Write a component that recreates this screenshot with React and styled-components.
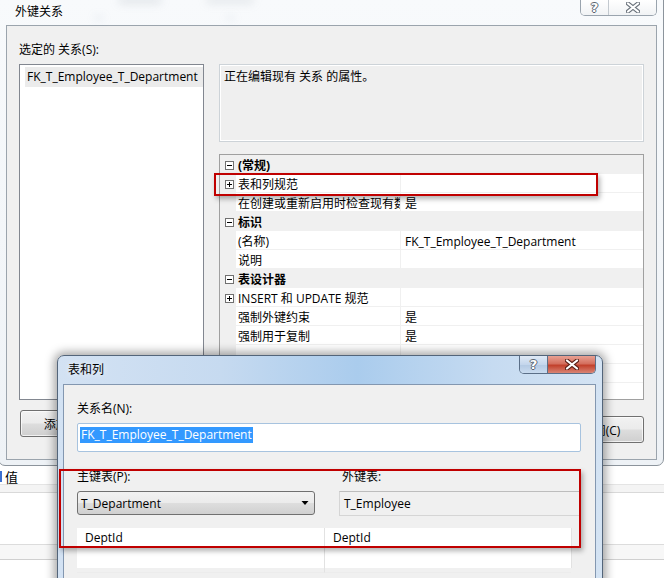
import React from 'react';
import styled, { createGlobalStyle } from 'styled-components';

const GlobalStyle = createGlobalStyle`
  html, body { margin: 0; padding: 0; background: #ffffff; }
  body {
    font-family: "Open Sans", "Noto Sans CJK SC", sans-serif;
    font-size: 12px;
    color: #000;
  }
  * { box-sizing: border-box; }
`;

const Desktop = styled.div`
  position: relative;
  width: 664px;
  height: 578px;
  overflow: hidden;
  background: #ffffff;
`;

/* ---------- window behind everything (bottom strip) ---------- */
const BehindWindow = styled.div`
  position: absolute;
  left: 0;
  top: 462px;
  width: 664px;
  height: 130px;
  background: #ffffff;
  display: flex;
  flex-direction: column;
`;

const BehindHeader = styled.div`
  height: 23px;
  display: flex;
  align-items: center;
  gap: 3px;
  padding: 7px 0 0 0;
  font-size: 13px;
  border-bottom: 1px solid #e4e4e4;
`;

const Caret = styled.span`
  width: 2px;
  height: 11px;
  background: #3a6fd0;
`;

const BehindBand = styled.div`
  height: ${p => p.$h}px;
  background: ${p => p.$bg};
  border-bottom: 1px solid ${p => p.$line};
`;

/* ---------- generic window parts ---------- */
const MainWindow = styled.div`
  position: absolute;
  left: -2px;
  top: -1px;
  width: 666px;
  height: 467px;
  background: linear-gradient(180deg, #f8fafc 0%, #eef2f6 100%);
  border: 1px solid #8c949c;
  border-radius: 0 0 7px 7px;
  display: flex;
  flex-direction: column;
  padding: 0 6px 5px 7px;
`;

const TitleBar = styled.div`
  position: relative;
  height: ${p => p.$h}px;
  display: flex;
  align-items: flex-start;
  padding: ${p => p.$pad};
  flex-shrink: 0;
`;

const TitleText = styled.div`
  position: relative;
  font-family: "Noto Sans CJK SC", sans-serif;
  font-size: 12px;
  line-height: 16px;
  color: #000;
  text-shadow: 0 0 6px rgba(255,255,255,0.9);
`;

const BlurBlob = styled.div`
  position: absolute;
  left: ${p => p.$x}px;
  top: ${p => p.$y}px;
  width: ${p => p.$w}px;
  height: ${p => p.$h}px;
  background: ${p => p.$c};
  filter: blur(4px);
  border-radius: 4px;
`;

const CaptionGroup = styled.div`
  position: absolute;
  top: 0;
  right: ${p => p.$right}px;
  display: flex;
  height: ${p => p.$h}px;
  border: 1px solid ${p => (p.$active ? '#5b6f88' : '#9aa4ae')};
  border-top: none;
  border-radius: 0 0 5px 5px;
  overflow: hidden;
  z-index: 2;
`;

const CapBtn = styled.div`
  width: ${p => p.$w}px;
  height: 100%;
  display: flex;
  align-items: center;
  justify-content: center;
  background: ${p =>
    p.$close
      ? 'linear-gradient(180deg, #e8a193 0%, #d46f5e 45%, #c2412c 55%, #d98474 100%)'
      : p.$active
      ? 'linear-gradient(180deg, #dfe9f5 0%, #c4d6ec 50%, #b3c9e3 51%, #c9dbef 100%)'
      : 'linear-gradient(180deg, #ffffff 0%, #f1f3f5 100%)'};
  border-left: ${p => (p.$divider ? `1px solid ${p.$active ? '#5b6f88' : '#c3c9cf'}` : 'none')};
`;

const HelpGlyph = styled.span`
  font-family: "DejaVu Sans", sans-serif;
  font-weight: bold;
  font-size: 13px;
  line-height: 13px;
  color: #ffffff;
  text-shadow: -1px 0 #5a6470, 1px 0 #5a6470, 0 -1px #5a6470, 0 1px #5a6470;
`;

const XIcon = ({ dark }) => (
  <svg width="14" height="11" viewBox="0 0 14 11">
    <path d="M2 1.5 L12 9.5 M12 1.5 L2 9.5" stroke={dark} strokeWidth="4.2" strokeLinecap="round" fill="none" />
    <path d="M2 1.5 L12 9.5 M12 1.5 L2 9.5" stroke="#ffffff" strokeWidth="2.2" strokeLinecap="round" fill="none" />
  </svg>
);

/* ---------- main dialog client ---------- */
const Client = styled.div`
  flex: 1;
  background: #f0f0f0;
  border: 1px solid #9ba4ad;
  display: grid;
  grid-template-columns: 185px 1fr;
  grid-template-rows: 16px 336px auto;
  column-gap: 15px;
  row-gap: 6px;
  padding: 16px 12px 0 12px;
`;

const Label = styled.div`
  font-size: 12px;
  line-height: 16px;
  white-space: nowrap;
  padding-left: ${p => p.$indent || 0}px;
`;

const ListBox = styled.div`
  background: #ffffff;
  border: 1px solid #828790;
  padding: 2px 0 0 5px;
`;

const ListItem = styled.div`
  height: 20px;
  line-height: 20px;
  padding-left: 2px;
  background: ${p => (p.$selected ? '#ebebeb' : 'transparent')};
  white-space: nowrap;
  overflow: hidden;
`;

const RightPanel = styled.div`
  display: flex;
  flex-direction: column;
  gap: 12px;
  min-width: 0;
`;

const DescBox = styled.div`
  height: 78px;
  border: 1px solid #cdd3d8;
  box-shadow: inset 1px 1px 0 #ffffff, inset -1px -1px 0 #ffffff;
  background: #efefef;
  padding: 4px 4px;
  line-height: 16px;
`;

const PropGrid = styled.div`
  flex: 1;
  background: #ffffff;
  border: 1px solid #a0a0a0;
  display: grid;
  grid-template-columns: 16px 165px 1fr;
  grid-auto-rows: 19px;
  align-content: start;
  overflow: hidden;
`;

const Gutter = styled.div`
  background: #f0f0f0;
  display: flex;
  align-items: center;
  justify-content: center;
  padding: 1px 0 0 3px;
`;

const NameCell = styled.div`
  display: flex;
  align-items: center;
  padding: 2px 0 0 2px;
  white-space: nowrap;
  overflow: hidden;
  border-bottom: 1px solid #f0f0f0;
  border-right: 1px solid #f0f0f0;
  font-weight: ${p => (p.$cat ? 'bold' : 'normal')};
  background: ${p => (p.$cat ? '#f0f0f0' : '#ffffff')};
  grid-column: ${p => (p.$cat ? '2 / 4' : 'auto')};
`;

const ValueCell = styled.div`
  display: flex;
  align-items: center;
  padding: 2px 0 0 4px;
  white-space: nowrap;
  overflow: hidden;
  border-bottom: 1px solid #f0f0f0;
`;

const Expander = ({ plus }) => (
  <svg width="9" height="9" viewBox="0 0 9 9">
    <rect x="0.5" y="0.5" width="8" height="8" fill="#ffffff" stroke="#707070" />
    <path d="M2 4.5 H7" stroke="#000" />
    {plus && <path d="M4.5 2 V7" stroke="#000" />}
  </svg>
);

const Button = styled.div`
  height: 27px;
  width: 86px;
  margin-top: ${p => p.$top}px;
  justify-self: ${p => (p.$end ? 'end' : 'start')};
  margin-left: ${p => (p.$end ? 0 : 1)}px;
  border: 1px solid #707070;
  border-radius: 3px;
  background: linear-gradient(180deg, #f2f2f2 0%, #ebebeb 48%, #dddddd 52%, #cfcfcf 100%);
  box-shadow: inset 0 0 0 1px rgba(255,255,255,0.7);
  display: flex;
  align-items: center;
  justify-content: center;
  font-size: 12px;
`;

/* ---------- front dialog ---------- */
const FrontWindow = styled.div`
  position: absolute;
  left: 57px;
  top: 355px;
  width: 546px;
  height: 240px;
  border: 1px solid #53657a;
  border-radius: 7px 7px 0 0;
  background: linear-gradient(90deg, #d3e2f3 0%, #c6daf0 30%, #aacced 55%, #c6dbf1 80%, #d4e3f3 100%);
  box-shadow: 0 0 10px 3px rgba(0, 0, 0, 0.35);
  display: flex;
  flex-direction: column;
  padding: 0 6px 0 5px;
  z-index: 3;
`;

const FrontClient = styled.div`
  flex: 1;
  background: #f0f0f0;
  border: 1px solid #8397b0;
  border-bottom: none;
  padding: 16px 14px 0 13px;
  display: flex;
  flex-direction: column;
`;

const TextInput = styled.div`
  margin-top: 6px;
  width: 504px;
  height: 29px;
  background: #ffffff;
  border: 1px solid #a7c3df;
  border-radius: 2px;
  padding: 2px 0 0 2px;
`;

const Selected = styled.span`
  display: inline-block;
  background: #3399ff;
  color: #ffffff;
  line-height: 16px;
  padding: 0 1px;
`;

const PairGrid = styled.div`
  margin-top: 17px;
  display: grid;
  grid-template-columns: 238px 241px;
  grid-template-rows: 16px 25px;
  column-gap: 24px;
  row-gap: 6px;
`;

const Select = styled.div`
  height: 24px;
  border: 1px solid #707070;
  border-radius: 3px;
  background: linear-gradient(180deg, #f2f2f2 0%, #ebebeb 48%, #dddddd 52%, #d0d0d0 100%);
  display: flex;
  align-items: center;
  justify-content: space-between;
  padding: 0 3px 0 3px;
`;

const ReadOnlyBox = styled.div`
  height: 25px;
  background: #f0f0f0;
  border: 1px solid #d5d5d5;
  border-top-color: #bdbdbd;
  display: flex;
  align-items: center;
  padding-left: 4px;
`;

const MapGrid = styled.div`
  margin-top: 12px;
  width: 495px;
  display: grid;
  grid-template-columns: 248px 1fr;
  grid-auto-rows: 20px;
  background: #ffffff;
  border-right: 1px solid #e2e2e2;
`;

const MapCell = styled.div`
  display: flex;
  align-items: center;
  padding-left: 8px;
  border-bottom: 1px solid #ececec;
  border-right: ${p => (p.$first ? '1px solid #e2e2e2' : 'none')};
  height: ${p => p.$h || 20}px;
`;

/* ---------- annotation ---------- */
const Highlight = styled.div`
  position: absolute;
  left: ${p => p.$x}px;
  top: ${p => p.$y}px;
  width: ${p => p.$w}px;
  height: ${p => p.$h}px;
  border: 2px solid #c00000;
  box-shadow: 2px 3px 5px rgba(0, 0, 0, 0.3);
  z-index: 5;
  pointer-events: none;
`;

const rows = [
  { cat: true, name: '(常规)', exp: 'minus' },
  { name: '表和列规范', exp: 'plus' },
  { name: '在创建或重新启用时检查现有数据', value: '是' },
  { cat: true, name: '标识', exp: 'minus' },
  { name: '(名称)', value: 'FK_T_Employee_T_Department' },
  { name: '说明' },
  { cat: true, name: '表设计器', exp: 'minus' },
  { name: 'INSERT 和 UPDATE 规范', exp: 'plus' },
  { name: '强制外键约束', value: '是' },
  { name: '强制用于复制', value: '是' },
  { name: '' },
  { name: '' },
  { name: '' },
];

export default function App() {
  return (
    <>
      <GlobalStyle />
      <Desktop>
        <BehindWindow>
          <BehindHeader>
            <Caret />
            <span>值</span>
          </BehindHeader>
          <BehindBand $h={8} $bg="#f4f4f4" $line="#d9d9d9" />
          <BehindBand $h={52} $bg="#ffffff" $line="#dcdcdc" />
          <BehindBand $h={15} $bg="#f7f7f7" $line="#d0d0d0" />
        </BehindWindow>

        <MainWindow>
          <TitleBar $h={25} $pad="3px 0 0 9px">
            <BlurBlob $x={112} $y={-3} $w={44} $h={7} $c="rgba(130,140,150,0.18)" />
            <BlurBlob $x={200} $y={-3} $w={48} $h={7} $c="rgba(130,140,150,0.16)" />
            <BlurBlob $x={88} $y={16} $w={10} $h={4} $c="rgba(120,140,170,0.14)" />
            <BlurBlob $x={220} $y={16} $w={9} $h={4} $c="rgba(120,140,170,0.14)" />
            <TitleText>外键关系</TitleText>
          </TitleBar>
          <CaptionGroup $right={6} $h={16}>
            <CapBtn $w={27}>
              <HelpGlyph>?</HelpGlyph>
            </CapBtn>
            <CapBtn $w={48} $divider>
              <XIcon dark="#6b737c" />
            </CapBtn>
          </CaptionGroup>
          <Client>
            <Label>选定的 关系(S):</Label>
            <div />
            <ListBox>
              <ListItem $selected>FK_T_Employee_T_Department</ListItem>
            </ListBox>
            <RightPanel>
              <DescBox>正在编辑现有 关系 的属性。</DescBox>
              <PropGrid>
                {rows.map((r, i) => (
                  <React.Fragment key={i}>
                    <Gutter>{r.exp && <Expander plus={r.exp === 'plus'} />}</Gutter>
                    <NameCell $cat={r.cat}>{r.name}</NameCell>
                    {!r.cat && <ValueCell>{r.value}</ValueCell>}
                  </React.Fragment>
                ))}
              </PropGrid>
            </RightPanel>
            <Button $top={4}>添加(A)</Button>
            <Button $top={10} $end>关闭(C)</Button>
          </Client>
        </MainWindow>

        <FrontWindow>
          <TitleBar $h={28} $pad="5px 0 0 5px">
            <TitleText>表和列</TitleText>
          </TitleBar>
          <CaptionGroup $right={6} $h={18} $active>
            <CapBtn $w={27} $active>
              <HelpGlyph>?</HelpGlyph>
            </CapBtn>
            <CapBtn $w={48} $divider $active $close>
              <XIcon dark="#5a2018" />
            </CapBtn>
          </CaptionGroup>
          <FrontClient>
            <Label>关系名(N):</Label>
            <TextInput>
              <Selected>FK_T_Employee_T_Department</Selected>
            </TextInput>
            <PairGrid>
              <Label>主键表(P):</Label>
              <Label $indent={3}>外键表:</Label>
              <Select>
                <span>T_Department</span>
                <svg width="12" height="6" viewBox="0 0 12 6">
                  <path d="M2.5 1 H9.5 L6 5 Z" fill="#000" />
                </svg>
              </Select>
              <ReadOnlyBox>T_Employee</ReadOnlyBox>
            </PairGrid>
            <MapGrid>
              <MapCell $first>DeptId</MapCell>
              <MapCell>DeptId</MapCell>
              <MapCell $first $h={25} />
              <MapCell $h={25} />
            </MapGrid>
          </FrontClient>
        </FrontWindow>

        <Highlight $x={214} $y={173} $w={384} $h={23} />
        <Highlight $x={59} $y={469} $w={522} $h={79} />
      </Desktop>
    </>
  );
}
